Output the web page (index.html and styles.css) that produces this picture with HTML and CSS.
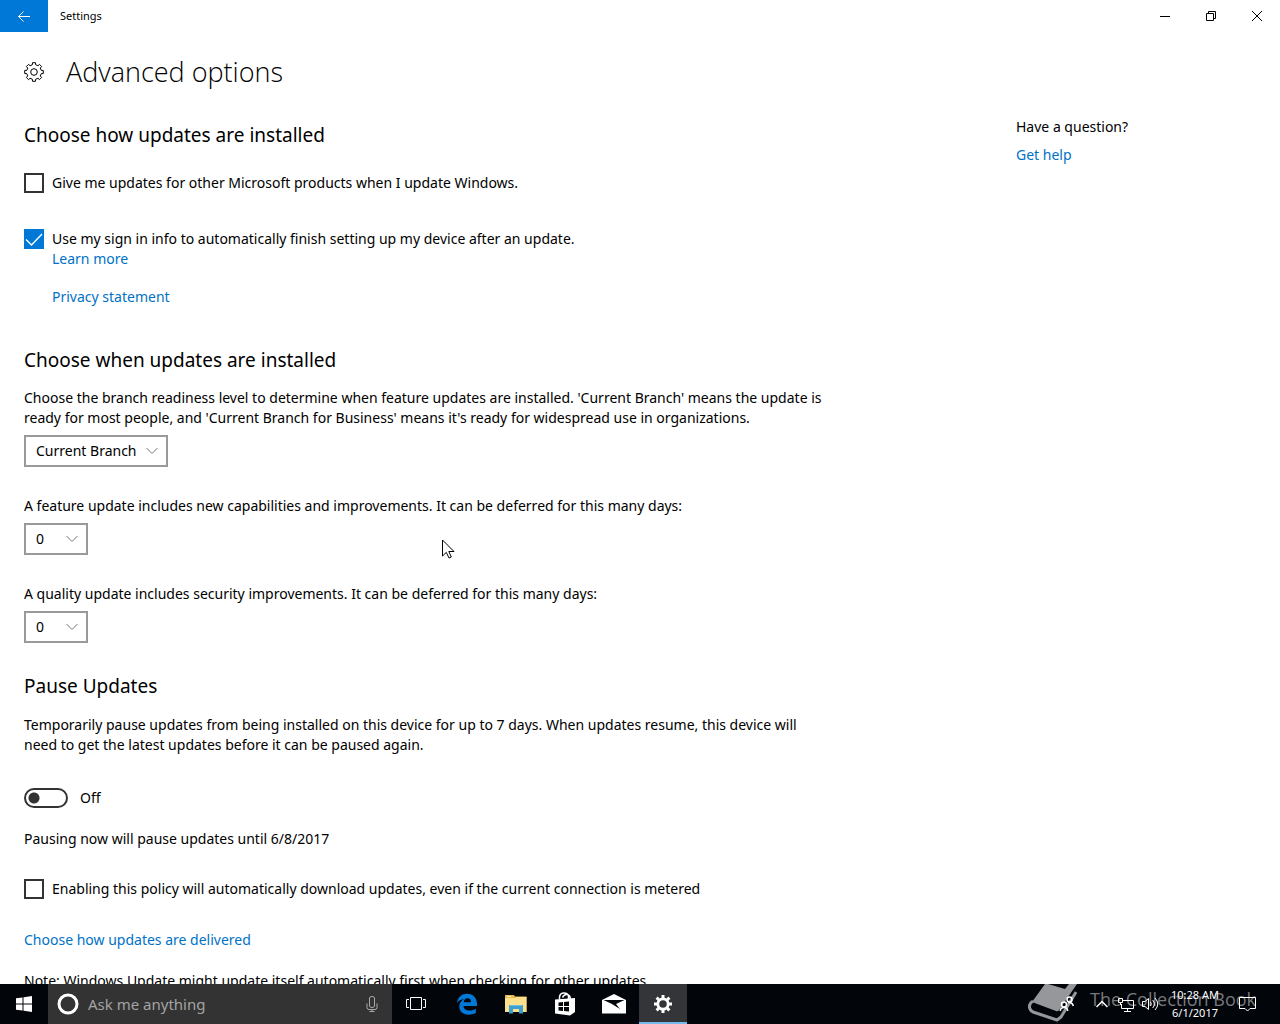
FILE: index.html
```html
<!DOCTYPE html>
<html lang="en">
<head>
<meta charset="utf-8">
<title>Settings</title>
<link rel="stylesheet" href="styles.css">
</head>
<body>
<header class="titlebar">
  <button class="back" aria-label="Back"><svg width="14" height="14" viewBox="0 0 14 14"><path d="M13 7.500H1.500M6.500 2.500L1.500 7.500L6.500 12.500"/></svg></button>
  <span class="app-name">Settings</span>
  <div class="window-buttons">
    <button aria-label="Minimize"><svg width="10" height="10" viewBox="0 0 10 10"><path d="M0 5.500H10"/></svg></button>
    <button aria-label="Restore"><svg width="10" height="10" viewBox="0 0 10 10"><path d="M.5 2.500H7.500V9.500H.5ZM2.500 2.500V.5H9.500V7.500H7.500"/></svg></button>
    <button aria-label="Close"><svg width="10" height="10" viewBox="0 0 10 10"><path d="M0 0L10 10M10 0L0 10"/></svg></button>
  </div>
</header>

<div class="page">
  <main class="content">
    <div class="page-title">
      <svg width="20" height="20" viewBox="0 0 20 20"><path d="M8.300 2.800L8.500.7L11.500.7L11.700 2.800L13.900 3.700L15.500 2.400L17.600 4.500L16.300 6.100L17.200 8.300L19.300 8.500L19.300 11.500L17.200 11.700L16.300 13.900L17.600 15.500L15.500 17.600L13.900 16.300L11.700 17.200L11.500 19.300L8.500 19.300L8.300 17.200L6.100 16.300L4.500 17.600L2.400 15.500L3.700 13.900L2.800 11.700L.7 11.500L.7 8.500L2.800 8.300L3.700 6.100L2.400 4.500L4.500 2.400L6.100 3.700Z"/><circle cx="10" cy="10" r="3.300"/></svg>
      <h1>Advanced options</h1>
    </div>

    <section class="how">
      <h2>Choose how updates are installed</h2>
      <label class="check"><input type="checkbox"><span>Give me updates for other Microsoft products when I update Windows.</span></label>
      <label class="check second"><input type="checkbox" checked><span>Use my sign in info to automatically finish setting up my device after an update.</span></label>
      <div class="sub-links">
        <a href="#learn">Learn more</a>
        <a href="#privacy">Privacy statement</a>
      </div>
    </section>

    <section class="when">
      <h2>Choose when updates are installed</h2>
      <div class="field">
        <label for="branch">Choose the branch readiness level to determine when feature updates are installed. 'Current Branch' means the update is ready for most people, and 'Current Branch for Business' means it's ready for widespread use in organizations.</label>
        <select id="branch" class="wide"><option>Current Branch</option><option>Current Branch for Business</option></select>
      </div>
      <div class="field">
        <label for="feature">A feature update includes new capabilities and improvements. It can be deferred for this many days:</label>
        <select id="feature"><option>0</option><option>1</option></select>
      </div>
      <div class="field">
        <label for="quality">A quality update includes security improvements. It can be deferred for this many days:</label>
        <select id="quality"><option>0</option><option>1</option></select>
      </div>
    </section>

    <section class="pause">
      <h2>Pause Updates</h2>
      <p>Temporarily pause updates from being installed on this device for up to 7 days. When updates resume, this device will need to get the latest updates before it can be paused again.</p>
      <label class="toggle"><input type="checkbox" role="switch"><span>Off</span></label>
      <p>Pausing now will pause updates until 6/8/2017</p>
      <label class="check metered"><input type="checkbox"><span>Enabling this policy will automatically download updates, even if the current connection is metered</span></label>
      <a class="delivery" href="#delivery">Choose how updates are delivered</a>
      <p class="note">Note: Windows Update might update itself automatically first when checking for other updates.</p>
    </section>
  </main>
  <aside class="help">
    <p>Have a question?</p>
    <a href="#help">Get help</a>
  </aside>
</div>

<footer class="taskbar">
  <button class="start" aria-label="Start"><svg width="16" height="16" viewBox="0 0 16 16"><path fill="#fff" d="M0 2.300L6.500 1.400V7.500H0ZM7.500 1.250L16 0V7.500H7.500ZM0 8.500H6.500V14.600L0 13.700ZM7.500 8.500H16V16L7.500 14.750Z"/></svg></button>
  <div class="search">
    <svg width="22" height="22" viewBox="0 0 22 22"><circle cx="11" cy="11" r="9" fill="none" stroke="#fff" stroke-width="3"/></svg>
    <input type="text" placeholder="Ask me anything" aria-label="Ask me anything">
    <button aria-label="Speak"><svg width="12" height="18" viewBox="0 0 12 18"><path class="mic" d="M3.500 3Q3.500 1.500 6 1.500T8.500 3V11Q8.500 12.500 6 12.500T3.500 11ZM1 8.500V12.500Q1 14.500 3 14.500H9Q11 14.500 11 12.500V8.500M6 14.500V17M3.500 16.500H8.500"/></svg></button>
  </div>
  <nav class="apps">
    <button aria-label="Task View"><svg width="20" height="14" viewBox="0 0 20 14"><path class="line" d="M4.500 .5H15.500V12.500H4.500ZM3 2.500H.5V10.500H3M17 2.500H19.500V10.500H17"/></svg></button>
    <button aria-label="Edge"><svg width="22" height="22" viewBox="0 0 22 22"><path fill="#0078d7" d="M1 10C2 3.600 6 .8 11 .8C17.500 .8 21 5.500 21 11V13H7.500C7.700 16.300 10.500 17.600 13.600 17.600C16 17.600 18.200 16.800 19.800 15.800V20C17.700 21.200 15.300 21.700 12.700 21.700C6.500 21.700 3.300 18 3.300 13.500C3.300 10 5.300 7.200 8.200 5.900C5 6.300 2.400 7.600 1 10ZM7.700 9.300H15C15 6.600 13.700 5.200 11.500 5.200C9.500 5.200 8.100 6.700 7.700 9.300Z"/></svg></button>
    <button aria-label="File Explorer"><svg width="22" height="20" viewBox="0 0 22 20"><path fill="#e7b84b" d="M0 1H9L10 2.500H21.500V18H0Z"/><path fill="#fce08b" d="M0 4H10L11 3H21.500V18H0Z"/><path fill="#fff5cc" d="M2 2H6V3H2Z"/><path fill="#3c9fcf" d="M4 11H18V19.500H14V15H8V19.500H4Z"/><path fill="#6bbfe3" d="M5 11H17V12H5Z"/></svg></button>
    <button aria-label="Store"><svg width="22" height="24" viewBox="0 0 22 24"><path fill="none" stroke="#fff" stroke-width="1.500" d="M5.500 7.500V5Q6 1 10 1T14.500 4.500V7M8.500 5.500Q10 2 13 2.500T16.500 7"/><path fill="#fff" d="M1 7.500L21 6V20L16 23.500L1 21.500Z"/><path fill="#02050a" d="M4.500 10.500L9 10V14H4.500ZM10 9.900L15 9.400V14H10ZM4.500 15H9V19L4.500 18.500ZM10 15H15V19.600L10 19.100Z"/></svg></button>
    <button aria-label="Mail"><svg width="24" height="20" viewBox="0 0 24 20"><path fill="#fff" d="M0 6L12 0L24 6V19.500H0Z"/><path fill="#02050a" d="M1.500 6H22.500L14 10L18 15L9.500 9.800Z"/></svg></button>
    <button class="active" aria-label="Settings"><svg width="18" height="18" viewBox="0 0 18 18"><circle cx="9" cy="9" r="5.200" fill="none" stroke="#fff" stroke-width="2.800"/><path stroke="#fff" stroke-width="3" d="M9 0V3M9 15V18M0 9H3M15 9H18M2.600 2.600L4.700 4.700M13.300 13.300L15.400 15.400M15.400 2.600L13.300 4.700M4.700 13.300L2.600 15.400"/></svg></button>
  </nav>
  <div class="tray">
    <button aria-label="People"><svg width="16" height="16" viewBox="0 0 16 16"><g class="line bold"><circle cx="10.500" cy="3.500" r="2.500"/><circle cx="5" cy="8.500" r="2.500"/><path d="M1.300 15Q1.500 11.500 5 11.500T8.700 15M9 6.500Q13.500 6 14.300 10"/></g></svg></button>
    <button aria-label="Show hidden icons"><svg width="12" height="8" viewBox="0 0 12 8"><path class="line bold" d="M.5 7L6 1.500L11.500 7"/></svg></button>
    <button aria-label="Network"><svg width="16" height="15" viewBox="0 0 16 15"><path class="line" d="M5 3.500H15.500V11.500H3.500V7M9.500 11.500V14M6 14.500H13M.5 1.500H4.500V5.500H.5ZM2.500 5.500V8"/></svg></button>
    <button aria-label="Volume"><svg width="17" height="14" viewBox="0 0 17 14"><path class="line" d="M.5 4.500H3L6.500 1.500V12.500L3 9.500H.5ZM8.500 5Q10 7 8.500 9M10.700 3Q14 7 10.700 11M13 1Q18.500 7 13 13"/></svg></button>
    <div class="clock"><time>10:28 AM</time><time>6/1/2017</time></div>
    <button class="notify" aria-label="Notifications"><svg width="17" height="16" viewBox="0 0 17 16"><path class="line" d="M.5 1.500H16.500V12.500H11L8.500 15L6 12.500H.5Z"/></svg></button>
  </div>
  <div class="watermark">
    <svg width="54" height="40" viewBox="0 0 54 40"><path fill="#96979a" d="M17 0H49L31 26Q30 28 28 27L4 18Z"/><path fill="none" stroke="#96979a" stroke-width="3" stroke-linejoin="round" d="M5 17Q0 20 2 25Q3 27 5 28L29 36L33 33L48 8"/><path fill="#02050a" d="M20 0H41L37 5Z"/></svg>
    <span>The Collection Book</span>
  </div>
</footer>

<svg class="cursor" width="13" height="20" viewBox="0 0 13 20"><path fill="#fff" stroke="#000" d="M.5 1V17L4.300 13.400L7 19L9.300 18L6.800 12.500H12Z"/></svg>
</body>
</html>
```
FILE: styles.css
```css
* { box-sizing: border-box; }

body {
  margin: 0;
  height: 100vh;
  display: grid;
  grid-template-rows: 32px minmax(0, 1fr) 40px;
  overflow: hidden;
  background: #fff;
  color: #000;
  font: 14px/20px "Noto Sans", "Open Sans", sans-serif;
}

h1, h2, p { margin: 0; font-weight: 400; }
a { color: #0072c6; text-decoration: none; }
svg { display: block; }

button {
  display: flex;
  align-items: center;
  justify-content: center;
  padding: 0;
  border: 0;
  background: none;
}

/* Title bar */
.titlebar { display: flex; align-items: stretch; }
.back { width: 48px; background: #0078d7; }
.back path { fill: none; stroke: #fff; }
.app-name { padding-left: 12px; font-size: 11px; line-height: 32px; }
.window-buttons { display: flex; margin-left: auto; }
.window-buttons button { width: 46px; }
.window-buttons path { fill: none; stroke: #000; }

/* Page */
.page {
  display: grid;
  grid-template-columns: minmax(0, 1fr) 264px;
  padding: 20px 0 0 24px;
  overflow: hidden;
}
.content { max-width: 808px; }
.page-title { display: flex; align-items: center; gap: 22px; height: 40px; }
.page-title svg { fill: none; stroke: #000; stroke-linejoin: round; }
h1 { font: 300 27px/40px "Open Sans", "Noto Sans", sans-serif; }
h2 { font-size: 19px; line-height: 24px; }

.how { margin-top: 31px; }
.when { margin-top: 41px; }
.pause { margin-top: 31px; }

.check { display: flex; gap: 8px; margin-top: 26px; }
.check.second { margin-top: 36px; }
.check input {
  appearance: none;
  flex: none;
  width: 20px;
  height: 20px;
  margin: 0;
  border: 2px solid #333;
}
.check input:checked {
  border: 0;
  background: #0078d7 url("data:image/svg+xml,%3Csvg xmlns='http://www.w3.org/2000/svg' viewBox='0 0 20 20'%3E%3Cpath d='M2 10.500L7.500 16L18 5' fill='none' stroke='white' stroke-width='1.400'/%3E%3C/svg%3E");
}
.sub-links { display: flex; flex-direction: column; align-items: flex-start; gap: 18px; padding-left: 28px; }

.field { display: flex; flex-direction: column; align-items: flex-start; gap: 7px; margin-top: 29px; }
h2 + .field { margin-top: 16px; }
select {
  appearance: none;
  width: 64px;
  height: 32px;
  padding: 0 10px;
  border: 2px solid #999;
  border-radius: 0;
  color: #000;
  font: inherit;
  background: #fff url("data:image/svg+xml,%3Csvg xmlns='http://www.w3.org/2000/svg' width='12' height='8'%3E%3Cpath d='M.5 1L6 6.500L11.500 1' fill='none' stroke='%23777'/%3E%3C/svg%3E") no-repeat right 8px center;
}
select.wide { width: 144px; }

h2 + p { margin-top: 17px; }
.toggle { display: flex; gap: 12px; margin: 33px 0 21px; }
.toggle input {
  appearance: none;
  width: 44px;
  height: 20px;
  margin: 0;
  border: 2px solid #333;
  border-radius: 10px;
  background: radial-gradient(circle at 8px 8px, #333 5px, transparent 6px);
}
.check.metered { margin-top: 30px; }
.delivery { display: block; width: fit-content; margin-top: 31px; }
.note { margin-top: 21px; }

.help { display: flex; flex-direction: column; align-items: flex-start; gap: 8px; padding-top: 65px; }

/* Taskbar */
.taskbar { position: relative; display: flex; background: #02050a; color: #fff; }
.line { fill: none; stroke: #fff; }
.line.bold { stroke-width: 1.5; }
.start { width: 48px; }
.search { display: flex; align-items: center; width: 344px; padding: 0 14px 0 9px; background: #333; }
.search input {
  flex: 1;
  min-width: 0;
  padding: 0 9px;
  border: 0;
  outline: 0;
  background: none;
  color: #fff;
  font: inherit;
}
.search input::placeholder { color: #a3a3a3; opacity: 1; }
.search input { font-size: 15px; }
.mic { fill: none; stroke: #aaa; }
.apps { display: flex; gap: 1px; }
.apps button { width: 48px; height: 40px; }
.apps button:first-child { margin-right: 2px; }
.apps button.active { background: #333539; border-bottom: 2px solid #76b9ed; border-top: 2px solid #333539; }
.tray { position: relative; z-index: 1; display: flex; margin-left: auto; }
.tray button { width: 24px; }
.tray button:first-child { width: 46px; }
.clock {
  display: flex;
  flex-direction: column;
  justify-content: center;
  width: 66px;
  text-align: center;
  font-size: 11px;
  line-height: 18px;
}
.tray .notify { width: 48px; padding-right: 10px; margin-right: 4px; }

/* Translucent mark beneath the tray icons */
.watermark {
  position: absolute;
  right: 24px;
  top: 0;
  display: flex;
  gap: 8px;
  height: 40px;
  overflow: hidden;
  color: #77787b;
  font: 18px/30px "Open Sans", sans-serif;
}

.cursor { position: absolute; left: 442px; top: 539px; pointer-events: none; }
```
